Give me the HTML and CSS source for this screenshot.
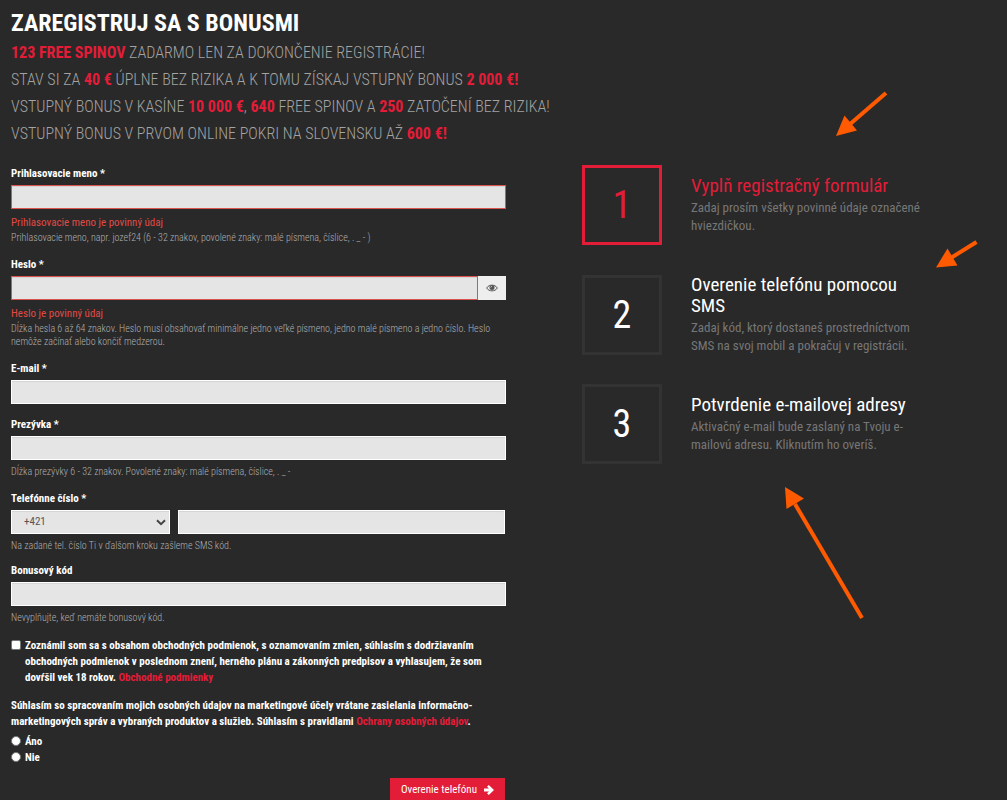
FILE: index.html
```html
<!DOCTYPE html>
<html lang="sk">
<head>
<meta charset="utf-8">
<meta name="viewport" content="width=device-width, initial-scale=1">
<title>Registrácia</title>
<link rel="stylesheet" href="styles.css">
</head>
<body>
<div class="page">
  <header class="intro">
    <h1 class="intro-title">ZAREGISTRUJ SA S BONUSMI</h1>
    <p class="intro-line"><strong>123 FREE SPINOV</strong> ZADARMO LEN ZA DOKONČENIE REGISTRÁCIE!</p>
    <p class="intro-line">STAV SI ZA <strong>40 €</strong> ÚPLNE BEZ RIZIKA A K TOMU ZÍSKAJ VSTUPNÝ BONUS <strong>2 000 €!</strong></p>
    <p class="intro-line">VSTUPNÝ BONUS V KASÍNE <strong>10 000 €</strong>, <strong>640</strong> FREE SPINOV A <strong>250</strong> ZATOČENÍ BEZ RIZIKA!</p>
    <p class="intro-line">VSTUPNÝ BONUS V PRVOM ONLINE POKRI NA SLOVENSKU AŽ <strong>600 €!</strong></p>
  </header>

  <main class="columns">
    <form class="form">
      <div class="group">
        <label class="label" for="login">Prihlasovacie meno *</label>
        <input class="control invalid" id="login" type="text">
        <p class="error">Prihlasovacie meno je povinný údaj</p>
        <p class="help">Prihlasovacie meno, napr. jozef24 (6 - 32 znakov, povolené znaky: malé písmena, číslice, . _ - )</p>
      </div>
      <div class="group">
        <label class="label" for="password">Heslo *</label>
        <div class="password">
          <input class="control invalid" id="password" type="password">
          <button class="reveal" type="button" aria-label="Zobraziť heslo">
            <svg width="12" height="8" viewBox="0 0 12 8"><path d="M.6 4C3 .2 9 .2 11.400 4 9 7.800 3 7.800.6 4z" fill="none" stroke="#555" stroke-width="1"/><circle cx="6" cy="3.600" r="2.500" fill="#555"/><path d="M4.700 3.600A1.300 1.300 0 0 1 6 2.300" fill="none" stroke="#eee" stroke-width=".6"/></svg>
          </button>
        </div>
        <p class="error">Heslo je povinný údaj</p>
        <p class="help">Dĺžka hesla 6 až 64 znakov. Heslo musí obsahovať minimálne jedno veľké písmeno, jedno malé písmeno a jedno číslo. Heslo nemôže začínať alebo končiť medzerou.</p>
      </div>
      <div class="group">
        <label class="label" for="email">E-mail *</label>
        <input class="control" id="email" type="email">
      </div>
      <div class="group">
        <label class="label" for="nick">Prezývka *</label>
        <input class="control" id="nick" type="text">
        <p class="help">Dĺžka prezývky 6 - 32 znakov. Povolené znaky: malé písmena, číslice, . _ -</p>
      </div>
      <div class="group group-phone">
        <label class="label" for="phone">Telefónne číslo *</label>
        <div class="phone">
          <div class="prefix">
            <select class="control" aria-label="Predvoľba"><option>+421</option></select>
            <svg class="chevron" width="10" height="7" viewBox="0 0 10 7"><path d="M1 1.200l4 4 4-4" fill="none" stroke="#444" stroke-width="2"/></svg>
          </div>
          <input class="control" id="phone" type="tel">
        </div>
        <p class="help">Na zadané tel. číslo Ti v ďalšom kroku zašleme SMS kód.</p>
      </div>
      <div class="group group-bonus">
        <label class="label" for="bonus">Bonusový kód</label>
        <input class="control" id="bonus" type="text">
        <p class="help">Nevyplňujte, keď nemáte bonusový kód.</p>
      </div>
      <div class="group choice">
        <input class="tick" id="terms" type="checkbox">
        <label for="terms">Zoznámil som sa s obsahom obchodných podmienok, s oznamovaním zmien, súhlasím s dodržiavaním obchodných podmienok v poslednom znení, herného plánu a zákonných predpisov a vyhlasujem, že som dovŕšil vek 18 rokov. <a href="#">Obchodné podmienky</a></label>
      </div>
      <fieldset class="group consent">
        <legend>Súhlasím so spracovaním mojich osobných údajov na marketingové účely vrátane zasielania informačno-marketingových správ a vybraných produktov a služieb. Súhlasím s pravidlami <a href="#">Ochrany osobných údajov</a>.</legend>
        <div class="choice"><input class="tick round" id="yes" name="marketing" type="radio"><label for="yes">Áno</label></div>
        <div class="choice"><input class="tick round" id="no" name="marketing" type="radio"><label for="no">Nie</label></div>
      </fieldset>
      <button class="submit" type="submit">Overenie telefónu
        <svg width="10" height="10" viewBox="0 0 10 10"><path d="M0 3.600h5L3 1.700 4.800 0 10 5 4.800 10 3 8.300 5 6.400H0z" fill="#fff"/></svg>
      </button>
    </form>

    <ol class="steps">
      <li class="step active">
        <span class="number">1</span>
        <div class="step-text"><h2>Vyplň registračný formulár</h2><p>Zadaj prosím všetky povinné údaje označené hviezdičkou.</p></div>
      </li>
      <li class="step">
        <span class="number">2</span>
        <div class="step-text"><h2>Overenie telefónu pomocou SMS</h2><p>Zadaj kód, ktorý dostaneš prostredníctvom SMS na svoj mobil a pokračuj v registrácii.</p></div>
      </li>
      <li class="step">
        <span class="number">3</span>
        <div class="step-text"><h2>Potvrdenie e-mailovej adresy</h2><p>Aktivačný e-mail bude zaslaný na Tvoju e-mailovú adresu. Kliknutím ho overíš.</p></div>
      </li>
    </ol>
  </main>

  <svg class="arrows" width="1007" height="800" viewBox="0 0 1007 800" aria-hidden="true">
    <g stroke="#ff5a00" stroke-width="4" fill="#ff5a00">
      <path d="M886 93L849 125"/><path stroke="none" d="M836 136l8.500-20.500 12.500 15z"/>
      <path d="M976.500 242L950 258.500"/><path stroke="none" d="M936 267.500l11.500-19 10 17z"/>
      <path d="M862 618L795 504"/><path stroke="none" d="M785 487l1.500 22 17.500-10.500z"/>
    </g>
  </svg>
</div>
</body>
</html>
```
FILE: styles.css
```css
* { box-sizing: border-box; }
body {
  margin: 0;
  background: #292929;
  color: #fff;
  font-family: "Roboto Condensed", "Liberation Sans Narrow", Roboto, sans-serif;
  font-size: 11px;
  line-height: 16px;
}
h1, h2, p, ol { margin: 0; padding: 0; }
input, select, button { font: inherit; margin: 0; }
.page { position: relative; padding: 8px 11px 0; }

.intro { margin-bottom: 18px; }
.intro-title { font-size: 24px; line-height: 31px; font-weight: 700; }
.intro-line { font-size: 16px; line-height: 27px; font-weight: 300; color: #a3a3a3; }
.intro-line strong { font-weight: 700; color: #e31c38; }

.columns {
  display: grid;
  grid-template-columns: minmax(0, 495fr) minmax(0, 414fr);
  gap: 76px;
  align-items: start;
}

.form { display: flex; flex-direction: column; }
.group { margin: 0 0 12px; }
.group-phone { margin-bottom: 10px; }
.group-bonus { margin-bottom: 14px; }
.label { display: block; margin-bottom: 2px; line-height: 18px; font-weight: 700; }
.control {
  display: block;
  width: 100%;
  height: 24px;
  padding: 0 12px;
  border: 1px solid #fff;
  border-radius: 0;
  background: #e5e5e5;
  color: #555;
  box-shadow: inset 0 1px 1px rgba(0, 0, 0, .075);
  appearance: none;
}
.invalid { border-color: #d9534f; }
.error { margin-top: 5px; font-size: 11px; line-height: 17px; color: #e04a45; }
.help { font-size: 10px; line-height: 13px; color: #b0b0b0; font-weight: 300; }
.control + .help, .phone + .help { margin-top: 5px; }

.password { display: flex; }
.reveal {
  display: flex;
  flex: none;
  align-items: center;
  justify-content: center;
  width: 28px;
  padding: 0;
  border: 0;
  background: #eee;
}
.phone { display: grid; grid-template-columns: 159fr 327fr; gap: 8px; padding-right: 1px; }
.prefix { position: relative; }
.chevron { position: absolute; right: 4px; top: 9px; pointer-events: none; }

.choice { display: flex; gap: 4px; font-weight: 700; }
.tick {
  flex: none;
  width: 10px;
  height: 10px;
  margin-top: 2px;
  border: 1px solid #767676;
  border-radius: 2px;
  background: #fff;
  appearance: none;
}
.round { border-radius: 50%; }
.tick:checked { background: #e31c38; }
a { color: #e31c38; text-decoration: none; }
.consent { padding: 0; border: 0; font-weight: 700; }
.consent legend { padding: 0; margin-bottom: 4px; }

.submit {
  display: flex;
  align-items: center;
  align-self: flex-end;
  gap: 7px;
  height: 24px;
  margin-right: 1px;
  padding: 0 11px;
  border: 0;
  background: #e31c38;
  color: #fff;
  font-size: 11px;
}

.steps { display: grid; gap: 29px; list-style: none; }
.step { display: flex; align-items: center; gap: 29px; }
.number {
  display: flex;
  flex: none;
  align-items: center;
  justify-content: center;
  width: 80px;
  height: 80px;
  border: 3px solid #333;
  font-size: 38px;
}
.step-text { max-width: 232px; }
.step h2 { margin-bottom: 3px; font-size: 19px; line-height: 21px; font-weight: 400; }
.step p { font-size: 13px; line-height: 18px; color: #777; }
.active h2, .active .number { color: #e31c38; }
.active .number { border-color: #e31c38; }

.arrows { position: absolute; left: 0; top: 0; pointer-events: none; }
```
